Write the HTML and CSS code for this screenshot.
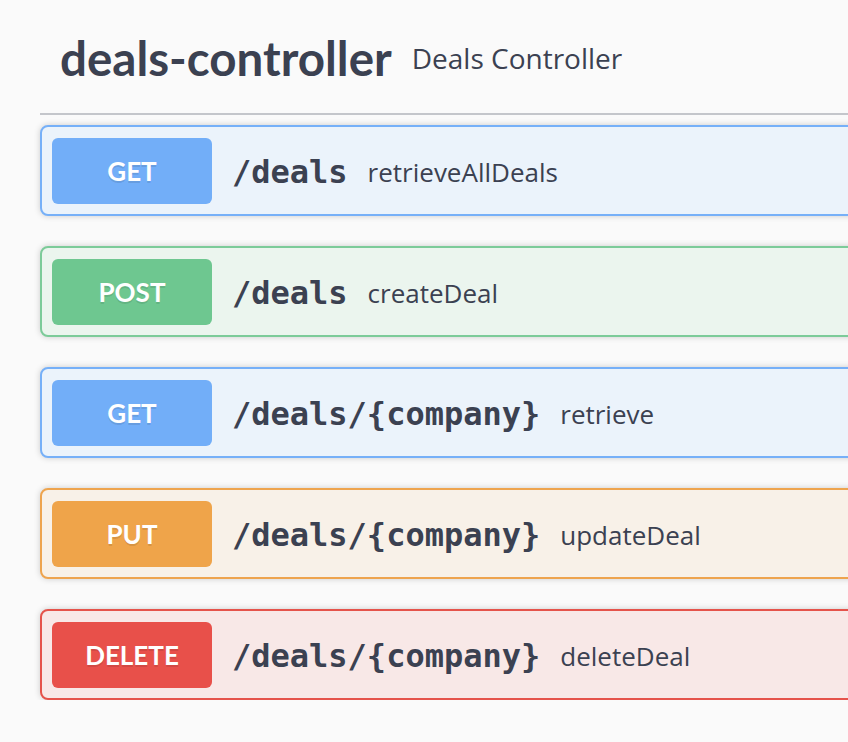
FILE: index.html
```html
<!DOCTYPE html>
<html lang="en">
<head>
<meta charset="utf-8">
<title>deals-controller</title>
<link rel="stylesheet" href="styles.css">
</head>
<body>
<div class="wrapper">
  <div class="tag-section">
    <h3 class="tag">
      <span class="tag-name">deals-controller</span>
      <small class="tag-desc">Deals Controller</small>
    </h3>
    <div class="ops">
      <div class="opblock get">
        <span class="method">GET</span>
        <span class="path">/deals</span>
        <span class="summary">retrieveAllDeals</span>
      </div>
      <div class="opblock post">
        <span class="method">POST</span>
        <span class="path">/deals</span>
        <span class="summary">createDeal</span>
      </div>
      <div class="opblock get">
        <span class="method">GET</span>
        <span class="path">/deals/{company}</span>
        <span class="summary">retrieve</span>
      </div>
      <div class="opblock put">
        <span class="method">PUT</span>
        <span class="path">/deals/{company}</span>
        <span class="summary">updateDeal</span>
      </div>
      <div class="opblock delete">
        <span class="method">DELETE</span>
        <span class="path">/deals/{company}</span>
        <span class="summary">deleteDeal</span>
      </div>
    </div>
  </div>
</div>
</body>
</html>
```

FILE: styles.css
```css
html, body {
  margin: 0;
  padding: 0;
  background: #fafafa;
  overflow: hidden;
}

body {
  font-family: "Open Sans", "Noto Sans", sans-serif;
  color: #3b4151;
}

.wrapper {
  width: 1400px;
  padding: 0 40px;
}

.tag {
  margin: 0 0 10px 0;
  height: 115px;
  box-sizing: border-box;
  padding: 2px 40px 0 20px;
  display: flex;
  align-items: center;
  border-bottom: 2px solid #c4c6cb;
  font-weight: normal;
}

.tag-name {
  font-family: "Lato", "Open Sans", sans-serif;
  font-weight: 700;
  font-size: 47.5px;
  color: #3b4151;
}

.tag-desc {
  font-family: "Open Sans", sans-serif;
  font-size: 28px;
  margin-left: 20px;
  color: #3b4151;
}

.ops {
  display: flex;
  flex-direction: column;
  gap: 30px;
}

.opblock {
  display: flex;
  align-items: center;
  padding: 10px;
  border: 2px solid;
  border-radius: 8px;
  box-shadow: 0 0 6px rgba(0, 0, 0, 0.19);
  height: 91px;
  box-sizing: border-box;
}

.method {
  width: 160px;
  height: 66px;
  flex: none;
  display: flex;
  align-items: center;
  justify-content: center;
  border-radius: 6px;
  color: #fff;
  font-family: "Lato", "Open Sans", sans-serif;
  font-weight: 700;
  font-size: 26px;
  text-shadow: 0 2px 0 rgba(0, 0, 0, 0.1);
}

.path {
  font-family: "DejaVu Sans Mono", "Liberation Mono", monospace;
  font-weight: 700;
  font-size: 32px;
  padding: 2px 20px 0;
  color: #3b4151;
}

.summary {
  font-family: "Open Sans", sans-serif;
  font-size: 26px;
  padding-top: 2px;
  color: #3b4151;
}

.get { background: #ebf3fb; border-color: #76b0f8; }
.get .method { background: #72aef8; }

.post { background: #ebf5ee; border-color: #7ccb99; }
.post .method { background: #6ec790; }

.put { background: #f8f1e8; border-color: #eea44e; }
.put .method { background: #efa44a; }

.delete { background: #f8e8e7; border-color: #e5534b; }
.delete .method { background: #e8504a; }
```
